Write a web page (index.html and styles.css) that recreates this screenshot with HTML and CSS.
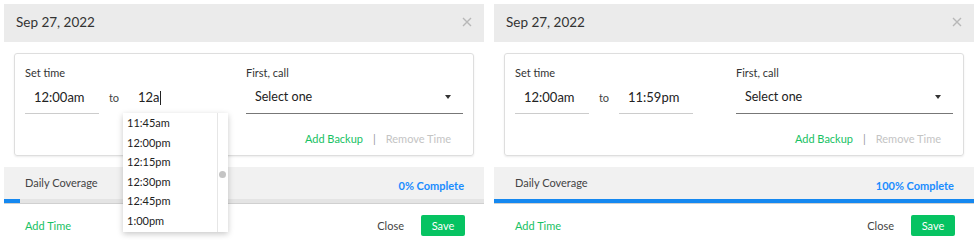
FILE: index.html
```html
<!DOCTYPE html>
<html lang="en">
<head>
  <meta charset="UTF-8">
  <title>Coverage</title>
  <link rel="stylesheet" href="styles.css">
</head>
<body>
  <div class="panels">
    <!-- editing state -->
    <div class="panel">
      <div class="panel-header">
        <span>Sep 27, 2022</span>
        <svg class="close-x" width="10" height="10" viewBox="0 0 10 10"><path d="M1 1L9 9M9 1L1 9"/></svg>
      </div>
      <div class="panel-body">
        <div class="card">
          <div class="card-row">
            <div class="time-group">
              <label>Set time</label>
              <div class="time-inputs">
                <div class="time-input">12:00am</div>
                <span class="to">to</span>
                <div class="time-input focused">12a<span class="caret"></span>
                  <ul class="time-menu">
                    <li>11:45am</li>
                    <li>12:00pm</li>
                    <li>12:15pm</li>
                    <li>12:30pm</li>
                    <li>12:45pm</li>
                    <li>1:00pm</li>
                    <span class="thumb"></span>
                  </ul>
                </div>
              </div>
            </div>
            <div class="call-group">
              <label>First, call</label>
              <div class="select">Select one <span class="arrow"></span></div>
            </div>
          </div>
          <div class="card-actions">
            <a class="green">Add Backup</a>
            <span class="sep">|</span>
            <a class="muted">Remove Time</a>
          </div>
        </div>
      </div>
      <div class="coverage">
        <span>Daily Coverage</span>
        <span class="complete">0% Complete</span>
      </div>
      <div class="progress"><div class="progress-fill" style="width: 3.3%"></div></div>
      <div class="panel-footer">
        <a class="green">Add Time</a>
        <div class="footer-btns">
          <button class="btn-close">Close</button>
          <button class="btn-save">Save</button>
        </div>
      </div>
    </div>

    <!-- filled state -->
    <div class="panel">
      <div class="panel-header">
        <span>Sep 27, 2022</span>
        <svg class="close-x" width="10" height="10" viewBox="0 0 10 10"><path d="M1 1L9 9M9 1L1 9"/></svg>
      </div>
      <div class="panel-body">
        <div class="card">
          <div class="card-row">
            <div class="time-group">
              <label>Set time</label>
              <div class="time-inputs">
                <div class="time-input">12:00am</div>
                <span class="to">to</span>
                <div class="time-input">11:59pm</div>
              </div>
            </div>
            <div class="call-group">
              <label>First, call</label>
              <div class="select">Select one <span class="arrow"></span></div>
            </div>
          </div>
          <div class="card-actions">
            <a class="green">Add Backup</a>
            <span class="sep">|</span>
            <a class="muted">Remove Time</a>
          </div>
        </div>
      </div>
      <div class="coverage">
        <span>Daily Coverage</span>
        <span class="complete">100% Complete</span>
      </div>
      <div class="progress"><div class="progress-fill" style="width: 100%"></div></div>
      <div class="panel-footer">
        <a class="green">Add Time</a>
        <div class="footer-btns">
          <button class="btn-close">Close</button>
          <button class="btn-save">Save</button>
        </div>
      </div>
    </div>
  </div>
</body>
</html>
```

FILE: styles.css
```css
* {
  margin: 0;
  padding: 0;
  box-sizing: border-box;
}

body {
  font-family: Lato, "Open Sans", sans-serif;
  background: #fff;
  color: #333;
}

.panels {
  display: flex;
  gap: 10px;
  padding: 4px;
}

.panel {
  width: 480px;
  background: #fff;
}

.panel-header {
  height: 38px;
  background: #ebebeb;
  display: flex;
  justify-content: space-between;
  align-items: center;
  padding: 0 12px 2px 12px;
  font-size: 13.5px;
  color: #333;
}

.close-x {
  stroke: #b8b8b8;
  stroke-width: 1.4;
  fill: none;
}

.panel-body {
  padding: 11px 10px;
}

.card {
  border: 1px solid #dedede;
  border-radius: 3px;
  box-shadow: 0 1px 2px rgba(0, 0, 0, 0.08);
  padding: 12px 10px 8px 10px;
}

.card-row {
  display: flex;
  gap: 43px;
}

label {
  display: block;
  font-size: 11px;
  line-height: 14px;
  color: #333;
}

.time-inputs {
  display: flex;
  align-items: center;
}

.time-input {
  position: relative;
  width: 74px;
  padding: 7px 9px 6px;
  line-height: 20px;
  font-size: 13px;
  border-bottom: 1px solid #ccc;
  color: #222;
}

.time-input.focused {
  border-bottom-color: #444;
}

.caret {
  display: inline-block;
  width: 1px;
  height: 14px;
  background: #222;
  vertical-align: -3px;
}

.to {
  width: 30px;
  text-align: center;
  font-size: 11px;
  color: #444;
}

.call-group {
  width: 219px;
}

.select {
  display: flex;
  justify-content: space-between;
  align-items: center;
  padding: 7px 12px 6px 9px;
  line-height: 20px;
  font-size: 12.5px;
  border-bottom: 1px solid #777;
  color: #222;
}

.arrow {
  width: 0;
  height: 0;
  border-left: 3.5px solid transparent;
  border-right: 3.5px solid transparent;
  border-top: 4px solid #333;
}

.card-actions {
  display: flex;
  justify-content: flex-end;
  align-items: center;
  gap: 10px;
  margin-top: 17px;
  padding-right: 12px;
  font-size: 11px;
  line-height: 16px;
}

.green {
  color: #17c163;
}

.muted {
  color: #c4c4c4;
}

.sep {
  color: #999;
}

.coverage {
  height: 32px;
  background: #f1f1f1;
  display: flex;
  justify-content: space-between;
  padding: 9px 20px 0 21px;
  font-size: 11px;
  color: #444;
}

.complete {
  color: #1a8cff;
  font-weight: 700;
  padding-top: 3px;
}

.progress {
  height: 5px;
  background: #e4e4e4;
  border-bottom: 1px solid #d0d0d0;
}

.progress-fill {
  height: 100%;
  background: #1588f0;
}

.panel-footer {
  display: flex;
  justify-content: space-between;
  align-items: center;
  padding: 11px 19px 0 21px;
  font-size: 11px;
}

.footer-btns {
  display: flex;
  align-items: center;
  gap: 17px;
}

.btn-close {
  border: none;
  background: none;
  font-family: inherit;
  font-size: 11px;
  color: #444;
}

.btn-save {
  border: none;
  border-radius: 2px;
  background: #06c362;
  color: #fff;
  font-family: inherit;
  font-size: 11px;
  width: 44px;
  height: 21px;
}

.time-menu {
  position: absolute;
  top: 100%;
  left: -6px;
  width: 105px;
  list-style: none;
  background: #fff;
  padding: 0 11px 2px 4px;
  box-shadow: 0 2px 6px rgba(0, 0, 0, 0.22);
  z-index: 2;
}

.time-menu::after {
  content: "";
  position: absolute;
  top: 0;
  bottom: 0;
  right: 10px;
  border-left: 1px solid #e6e6e6;
}

.time-menu li {
  font-size: 11px;
  line-height: 19.5px;
  color: #222;
}

.thumb {
  position: absolute;
  right: 2px;
  top: 58px;
  width: 7px;
  height: 7px;
  border-radius: 50%;
  background: #c4c4c4;
}
```
